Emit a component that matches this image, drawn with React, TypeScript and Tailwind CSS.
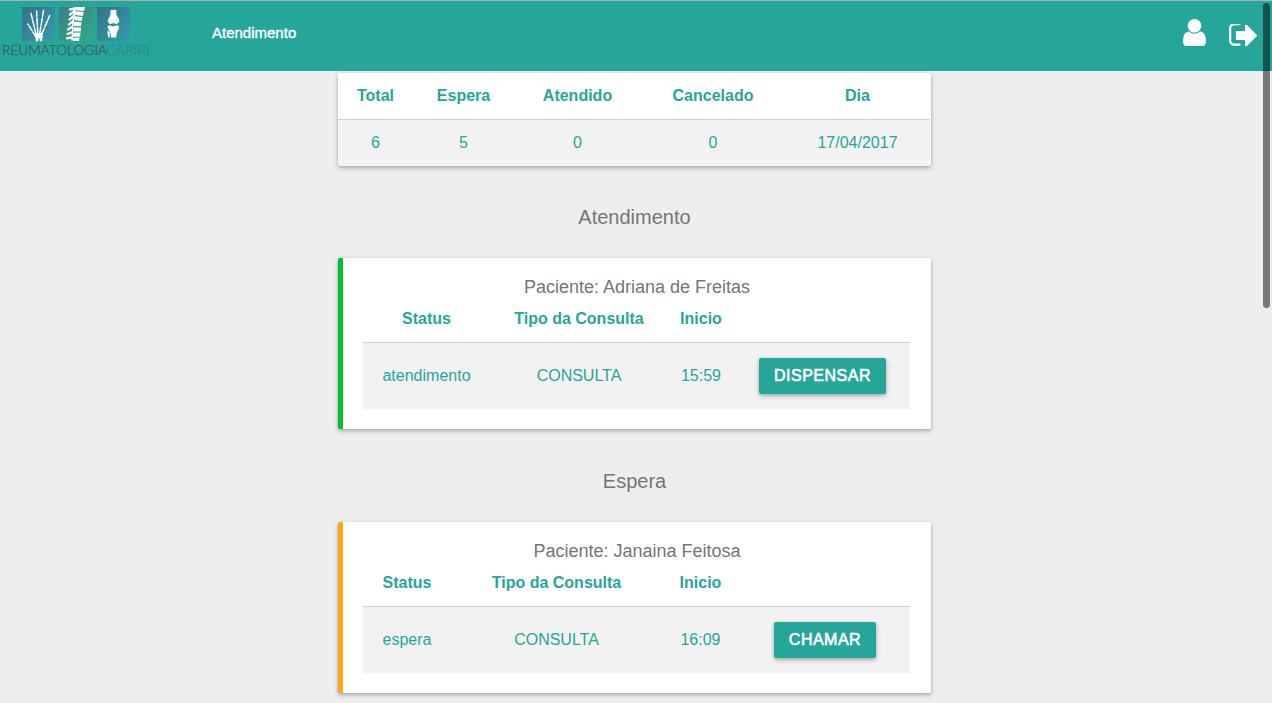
import React from "react";

const FONT = "font-['Liberation_Sans',Arial,sans-serif]";
const SHADOW = "shadow-[0_2px_5px_0_rgba(0,0,0,0.26),0_1px_3px_0_rgba(0,0,0,0.1)]";

function Logo() {
  return (
    <svg className="-mt-px" width="152" height="62" viewBox="0 0 152 62" aria-label="Reumatologia Cariri">
      <defs>
        <linearGradient id="blue" x1="0" y1="0" x2="1" y2="1">
          <stop offset="0" stopColor="#34728a" />
          <stop offset="1" stopColor="#349cab" />
        </linearGradient>
        <linearGradient id="green" x1="0" y1="0" x2="1" y2="1">
          <stop offset="0" stopColor="#3b7d88" />
          <stop offset="1" stopColor="#32ab83" />
        </linearGradient>
      </defs>
      <rect x="22" y="7" width="33" height="34" rx="1" fill="url(#blue)" />
      <rect x="59" y="7" width="34" height="34" rx="1" fill="url(#green)" />
      <rect x="97" y="7" width="33" height="34" rx="1" fill="url(#blue)" />
      {/* hand */}
      <g stroke="#fff" fill="none" strokeLinecap="round">
        <g strokeWidth="1.5">
          <path d="M36 34 31 13.5" strokeDasharray="6 1.7" />
          <path d="M37.8 33 36.6 11" strokeDasharray="6.5 1.7" />
          <path d="M39.8 33 43.5 10.5" strokeDasharray="6.5 1.7" />
          <path d="M41.8 34 49.7 15.5" strokeDasharray="6 1.7" />
          <path d="M35.5 36 27.8 24" strokeDasharray="5 1.7" />
        </g>
        <path d="M36.5 34.5h5M36.5 37h5" strokeWidth="2.8" />
        <path d="M37 39.3v.8M41 39.3v.8" strokeWidth="2.8" />
      </g>
      {/* spine */}
      <g fill="#fff">
        <path d="M76 7h9l-1 4-8.8-.8z" />
        <path d="M75.5 11.3l8.3.8-1 3.8-8-.8z" />
        <path d="M74.5 16.2l8 .8-.7 4-7.500-.7z" />
        <path d="M73.800 21.700l7.700.6-.3 4-7.600-.3z" />
        <path d="M73.500 27.200l7.400.2v4l-7.200.1z" />
        <path d="M73.500 32.700l7-.1-.3 4-7 .3z" />
        <path d="M73 37.900l6.500-.3-.5 3.400h-6z" />
      </g>
      <g stroke="#fff" strokeWidth="2.3" strokeLinecap="round" fill="none">
        <path d="M75 8.500l-5 .8M74 11.500l-4 3M73.500 16l-4 3.500M72.500 21.500l-3.500 3M72 27l-4 2.500M71.500 32.500l-4 1.500M71 37.500l-4 .8" />
        <path d="M75.500 8c-1.500 7-2.800 13-2.800 18s0 9-.7 14" strokeWidth="1.500" />
      </g>
      {/* joint */}
      <g fill="#fff">
        <path d="M110.3 10.3c2-.9 4.5-.9 6.2 0-.6 2.4-.2 5 1.4 7.2 2 2 2 5-.6 6.1-1.4.6-2.6.2-3.8-.5-1.5 1-4.3 1.3-5.3-.5-.9-1.8 0-3.8 1.3-5.3 1-2.2 1.3-4.600.8-7z" />
        <path d="M108 25.8c2-1 4 .5 5.5.4 1.7-.1 3.5-1.7 5.2-.3 1.2 1.6-.6 4-1.4 5.5-.8 2-.9 4.300-1.200 6h-5c-.5-2.300-.5-4.200-1.300-6-1-1.700-3-4-1.800-5.600z" />
        <path d="M107.700 30.500l2 1.500v5.500h-1.400c-.2-2.500-1.300-4.500-.6-7z" />
      </g>
      <text
        x="2"
        y="55"
        className="font-['Lato',sans-serif] text-[13px] font-light"
        textLength="105"
        lengthAdjust="spacingAndGlyphs"
        fill="#43565a"
        stroke="#43565a"
        strokeWidth="0.25"
      >
        REUMATOLOGIA
      </text>
      <text
        x="106"
        y="55"
        className="font-['Lato',sans-serif] text-[13px] font-light"
        textLength="44"
        lengthAdjust="spacingAndGlyphs"
        fill="#38808c"
        stroke="#38808c"
        strokeWidth="0.25"
      >
        CARIRI
      </text>
    </svg>
  );
}

function UserIcon() {
  return (
    <svg className="mt-[17px] h-[28px] w-[23px]" viewBox="0 0 1280 1568" fill="#fff">
      <path
        transform="translate(0 1464) scale(1 -1)"
        d="M1280 137q0-109-62.5-187t-150.5-78h-854q-88 0-150.5 78t-62.5 187q0 85 8.5 160.5t31.5 152t58.5 131t94 89t134.5 34.5q131-128 313-128t313 128q76 0 134.5-34.5t94-89t58.5-131t31.5-152t8.5-160.5zM1024 1024q0-159-112.5-271.5t-271.5-112.5t-271.5 112.5t-112.5 271.5t112.5 271.5t271.5 112.5t271.5-112.5t112.5-271.5z"
      />
    </svg>
  );
}

function SignOutIcon() {
  return (
    <svg className="mt-[23px] h-[23px] w-[28px]" viewBox="0 0 1568 1288" fill="#fff">
      <path
        transform="translate(0 1284) scale(1 -1)"
        d="M640 96q0 4 1 20t0.5 26.5t-3 23.5t-10 19.5t-20.5 6.5h-320q-66 0-113 47t-47 113v704q0 66 47 113t113 47h288h11h13t11.5 1t11.5 3t8 5.5t7 9t2 13.5q0 4 1 20t0.5 26.5t-3 23.5t-10 19.5t-20.5 6.5h-320q-119 0-203.5-84.5t-84.5-203.5v-704q0-119 84.5-203.5t203.5-84.5h320q13 0 22.5 9.5t9.5 22.5zM1568 640q0-26-19-45l-544-544q-19-19-45-19t-45 19t-19 45v288h-448q-26 0-45 19t-19 45v384q0 26 19 45t45 19h448v288q0 26 19 45t45 19t45-19l544-544q19-19 19-45z"
      />
    </svg>
  );
}

function Header() {
  return (
    <header className="flex h-[71px] items-start border-t border-[#b0b0b0] bg-[#26a69a]">
      <Logo />
      <a className="ml-[60px] mt-[22px] text-[15px] leading-5 text-white [-webkit-text-stroke:0.35px_white]">
        Atendimento
      </a>
      <div className="ml-auto mr-[15px] flex items-start gap-[23px]">
        <UserIcon />
        <SignOutIcon />
      </div>
    </header>
  );
}

function Summary() {
  const cols = "grid grid-cols-[75px_101px_127px_144px_145px] text-center leading-[46px]";
  return (
    <section className={`mt-[2px] h-[93px] rounded-[2px] bg-white ${SHADOW}`}>
      <div className="w-[592px] overflow-hidden rounded-bl-[2px] text-[#26a69a]">
        <div className={`${cols} h-[47px] border-b border-[#d0d0d0] font-bold`}>
          <span>Total</span>
          <span>Espera</span>
          <span>Atendido</span>
          <span>Cancelado</span>
          <span>Dia</span>
        </div>
        <div className={`${cols} h-[46px] bg-[#f2f2f2]`}>
          <span>6</span>
          <span>5</span>
          <span>0</span>
          <span>0</span>
          <span>17/04/2017</span>
        </div>
      </div>
    </section>
  );
}

type PatientProps = {
  name: string;
  status: string;
  time: string;
  action: string;
  accent: string;
  cols: string;
};

function PatientCard({ name, status, time, action, accent, cols }: PatientProps) {
  return (
    <section
      className={`h-[171px] rounded-[2px] border-l-[5px] bg-white pl-5 pr-[21px] pt-[17px] ${accent} ${SHADOW}`}
    >
      <h2 className="h-[24px] pl-px text-center text-[18px] leading-[24px] text-[#757575]">
        Paciente: {name}
      </h2>
      <div
        className={`grid h-[44px] ${cols} border-b border-[#d0d0d0] text-center font-bold leading-[39px] text-[#26a69a]`}
      >
        <span>Status</span>
        <span>Tipo da Consulta</span>
        <span>Inicio</span>
        <span />
      </div>
      <div
        className={`grid h-[66px] ${cols} items-center justify-items-center bg-[#f2f2f2] text-[#26a69a]`}
      >
        <span>{status}</span>
        <span>CONSULTA</span>
        <span>{time}</span>
        <button
          className={`ml-px h-9 rounded-[2px] bg-[#26a69a] px-[15px] tracking-[0.5px] text-white [-webkit-text-stroke:0.6px_white] ${SHADOW}`}
        >
          {action}
        </button>
      </div>
    </section>
  );
}

function SectionTitle({ children }: { children: React.ReactNode }) {
  return (
    <h1 className="flex items-center justify-center pb-[29px] pt-[39px] text-[20px] leading-6 text-[#757575]">
      {children}
    </h1>
  );
}

export default function App() {
  return (
    <div className={`relative h-[703px] overflow-hidden bg-[#eeeeee] text-[16px] ${FONT}`}>
      <Header />
      <main className="ml-[338px] w-[593px]">
        <Summary />
        <SectionTitle>Atendimento</SectionTitle>
        <PatientCard
          name="Adriana de Freitas"
          status="atendimento"
          time="15:59"
          action="DISPENSAR"
          accent="border-[#00c02b]"
          cols="grid-cols-[127px_178px_66px_176px]"
        />
        <div className="pt-px">
          <SectionTitle>Espera</SectionTitle>
        </div>
        <PatientCard
          name="Janaina Feitosa"
          status="espera"
          time="16:09"
          action="CHAMAR"
          accent="border-[#ffa51a]"
          cols="grid-cols-[88px_211px_77px_171px]"
        />
      </main>
      <div className="absolute right-[2px] top-[3px] h-[305px] w-[7px] rounded-full bg-black/50" />
    </div>
  );
}
